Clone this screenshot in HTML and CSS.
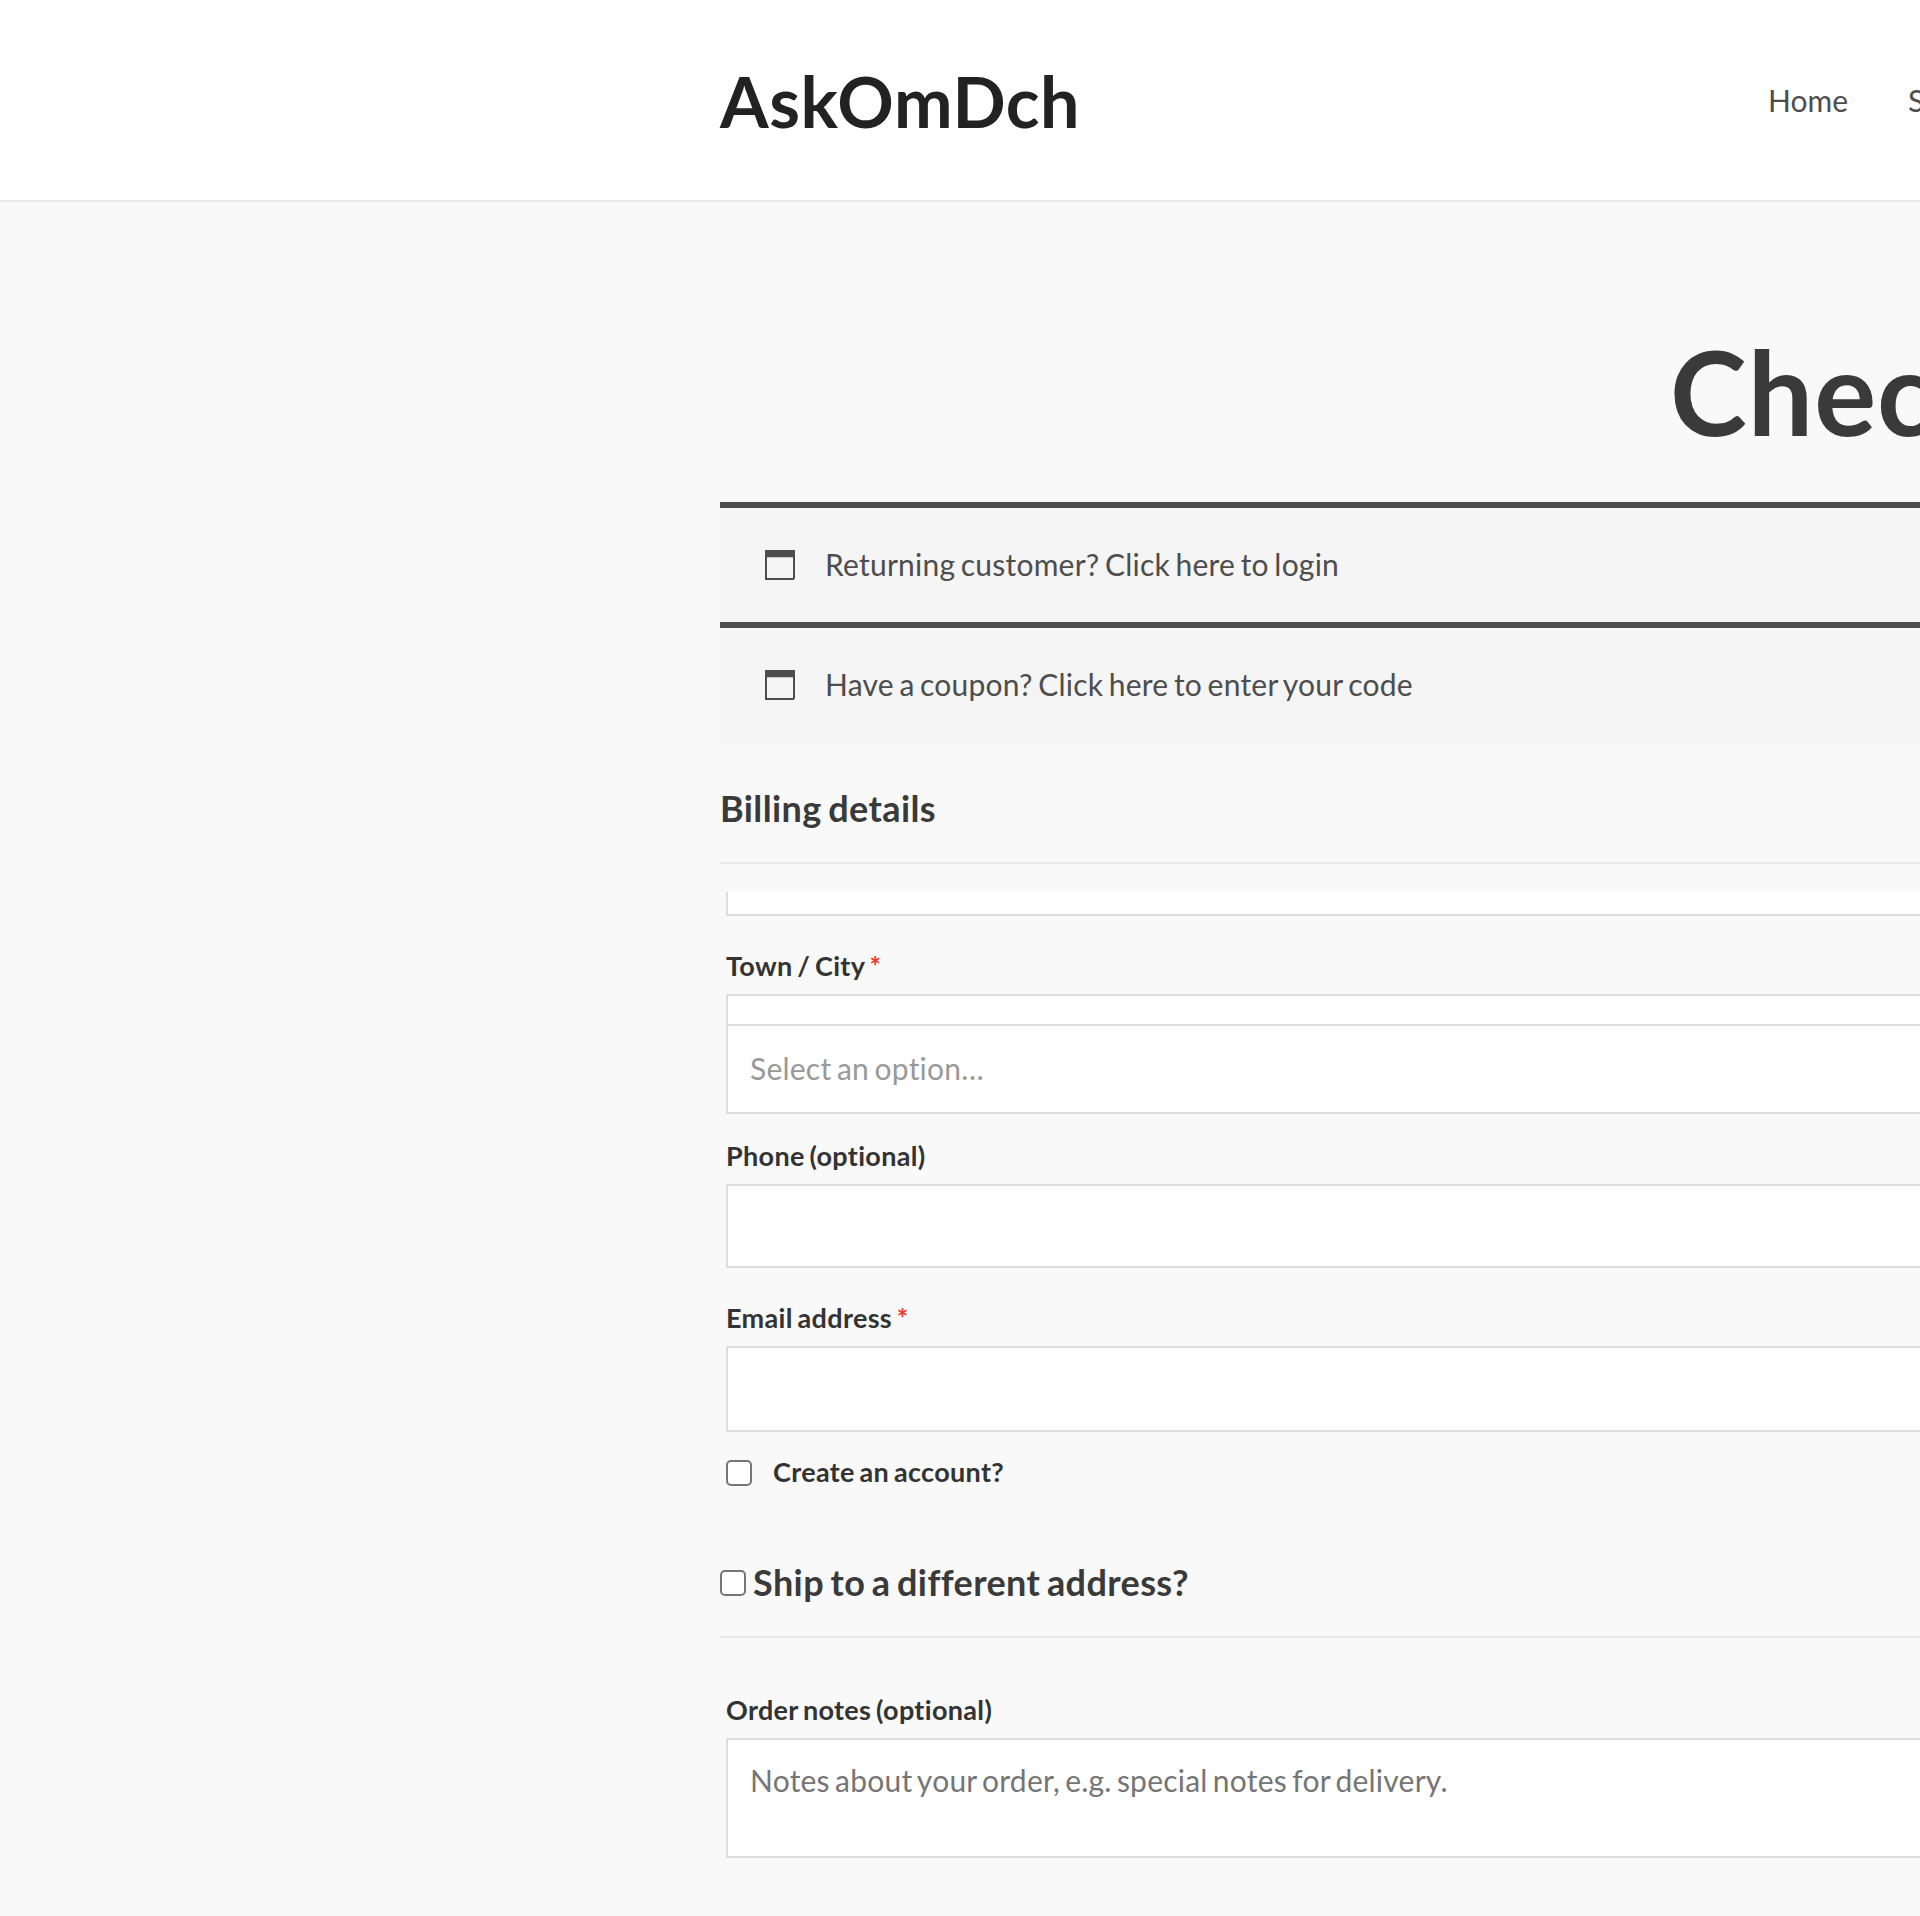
FILE: index.html
```html
<!DOCTYPE html>
<html lang="en">
<head>
<meta charset="utf-8">
<title>Checkout – AskOmDch</title>
<link rel="stylesheet" href="styles.css">
</head>
<body>
<header class="site-header">
  <a class="site-title">AskOmDch</a>
  <nav class="main-nav"><a>Home</a><a>Store</a></nav>
</header>
<main class="content">
  <h1 class="page-title">Checkout</h1>
  <div class="notice">
    <svg class="notice-icon" viewBox="0 0 30 30"><path fill="currentColor" fill-rule="evenodd" d="M0 0H30V28.6L28.6 30H0ZM2 7.3V28H28V7.3Z"/></svg>
    <span>Returning customer? Click here to login</span>
  </div>
  <div class="notice notice-coupon">
    <svg class="notice-icon" viewBox="0 0 30 30"><path fill="currentColor" fill-rule="evenodd" d="M0 0H30V28.6L28.6 30H0ZM2 7.3V28H28V7.3Z"/></svg>
    <span>Have a coupon? Click here to enter your code</span>
  </div>
  <h3 class="section-title">Billing details</h3>
  <form class="fields">
    <div class="box box-partial"></div>
    <label class="label">Town / City <span class="required">*</span></label>
    <div class="box"></div>
    <div class="box select">Select an option…</div>
    <label class="label label-phone">Phone (optional)</label>
    <div class="box"></div>
    <label class="label">Email address <span class="required">*</span></label>
    <div class="box box-email"></div>
    <label class="check-row"><span class="checkbox"></span>Create an account?</label>
  </form>
  <h3 class="section-title ship-title"><span class="checkbox"></span>Ship to a different address?</h3>
  <div class="fields">
    <label class="label label-notes">Order notes (optional)</label>
    <div class="box notes">Notes about your order, e.g. special notes for delivery.</div>
  </div>
</main>
</body>
</html>
```
FILE: styles.css
```css
* { box-sizing: border-box; }
body {
  margin: 0;
  height: 1916px;
  overflow: hidden;
  background: #f9f9f9;
  color: #4d4d4d;
  font: 400 30px/52px Lato, sans-serif;
  font-variant-ligatures: none;
  letter-spacing: 0.23px;
  word-spacing: -2.4px;
  white-space: nowrap;
}
.site-header {
  display: flex;
  align-items: center;
  height: 202px;
  padding-left: 720px;
  background: #fff;
  border-bottom: 2px solid #eaeaea;
}
.site-title {
  width: 1048px;
  flex: none;
  padding-top: 1px;
  color: #222;
  font-size: 70px;
  font-weight: 700;
  letter-spacing: 0.6px;
  line-height: 84px;
}
.main-nav { display: flex; flex: none; gap: 60px; letter-spacing: 0; }
.content { margin-left: 720px; }
.page-title {
  margin: 120px 0 40px;
  padding-left: 950px;
  color: #3a3a3a;
  font-size: 116px;
  letter-spacing: 1px;
  line-height: 140px;
}
.notice {
  display: flex;
  gap: 30px;
  height: 120px;
  padding: 30px 45px;
  border-top: 6px solid #4d4d4d;
  background: #f5f5f5;
}
.notice-coupon { height: 122px; }
.notice-icon { width: 30px; height: 30px; margin-top: 12px; }
.section-title {
  margin: 42px 0 0;
  padding-bottom: 32px;
  border-bottom: 2px solid #eaeaea;
  color: #3a3a3a;
  font-size: 36px;
  letter-spacing: 0.4px;
  word-spacing: -2.6px;
  line-height: 44px;
}
.fields { padding-left: 6px; }
.box {
  height: 84px;
  border: 2px solid #ddd;
  border-right: 0;
  background: #fff;
}
.box-partial { height: 24px; margin-top: 28px; border-top: 0; }
.box-email { height: 86px; }
.label {
  display: block;
  margin: 31px 0 10px;
  color: #333;
  font-size: 27px;
  font-weight: 700;
  letter-spacing: 0.33px;
  word-spacing: -2.1px;
  line-height: 37px;
}
.label-phone { margin-top: 23px; }
.label-notes { margin-top: 53px; }
.required { color: #f0372b; }
.select {
  height: 90px;
  margin-top: -54px;
  padding: 16px 22px;
  color: #999;
}
.check-row {
  display: flex;
  gap: 21px;
  margin-top: 21px;
  color: #333;
  font-size: 27px;
  font-weight: 700;
  letter-spacing: 0.33px;
  word-spacing: -2.1px;
  line-height: 37px;
}
.checkbox {
  flex: none;
  width: 26px;
  height: 26px;
  margin-top: 7px;
  border: 2px solid #767676;
  border-radius: 5px;
  background: #fff;
}
.ship-title { display: flex; gap: 7px; margin-top: 70px; }
.ship-title .checkbox { margin-top: 10px; }
.notes {
  height: 120px;
  padding: 14px 22px;
  color: #757575;
  word-spacing: -2.7px;
}
```
